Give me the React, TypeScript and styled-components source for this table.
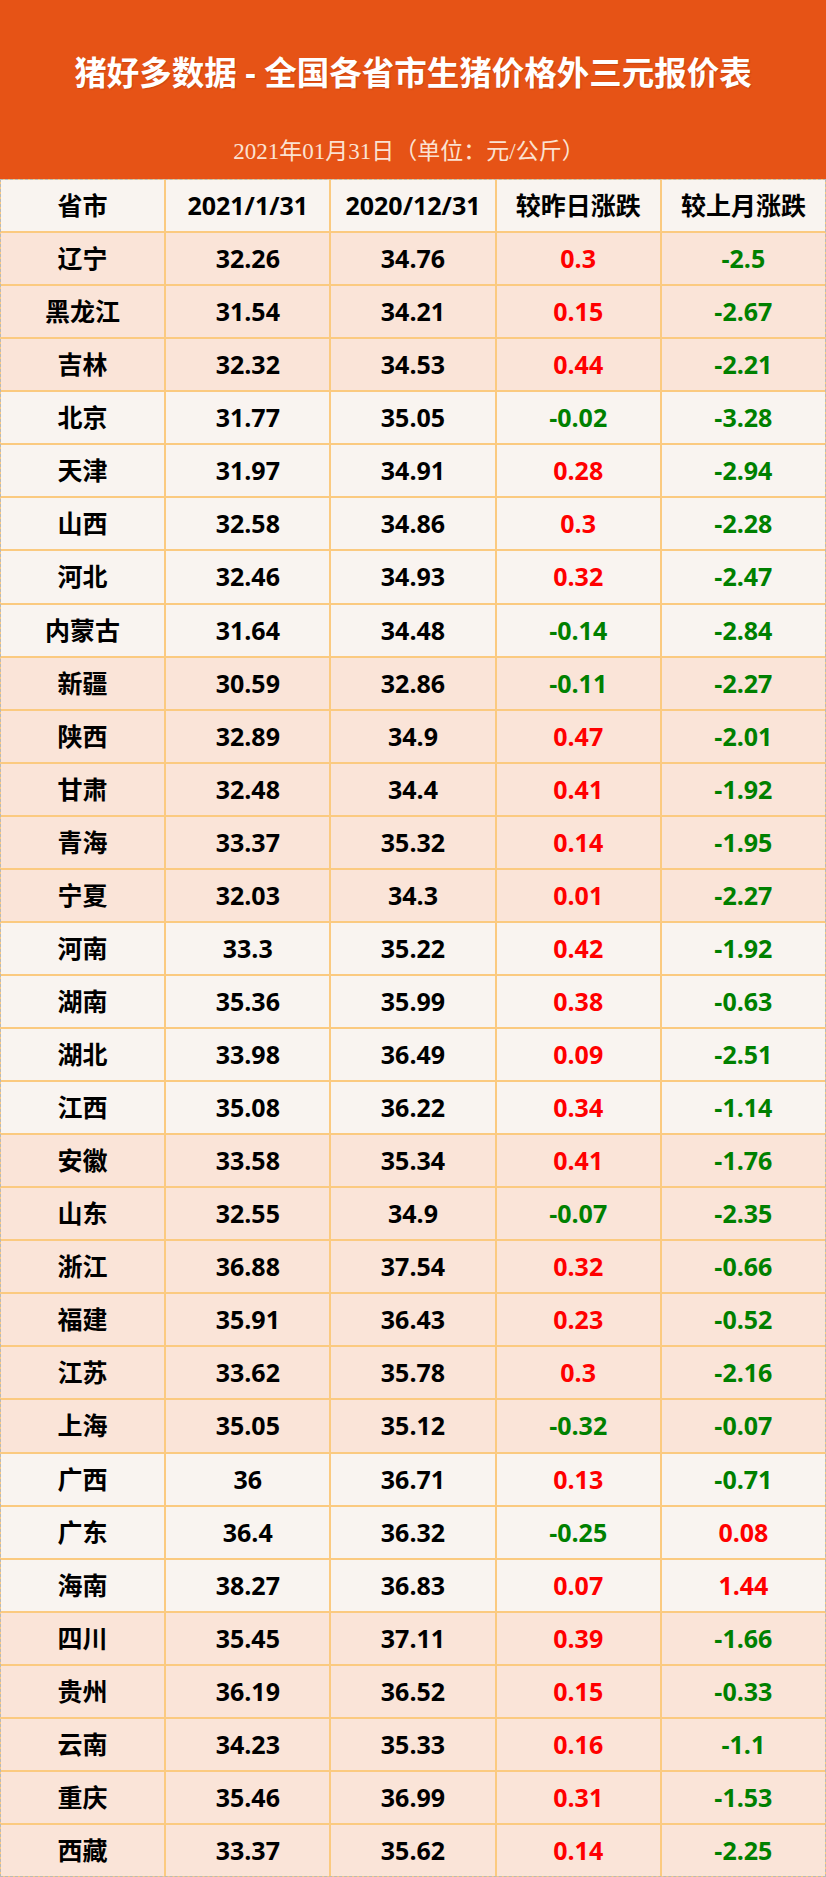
import React from "react";
import styled, { createGlobalStyle } from "styled-components";

type Tone = "light" | "pink";

type PriceRow = {
  name: string;
  today: string;
  lastMonth: string;
  dayDiff: string;
  monthDiff: string;
  tone: Tone;
};

const raw: [string, string, string, string, string][] = [
  ["辽宁", "32.26", "34.76", "0.3", "-2.5"],
  ["黑龙江", "31.54", "34.21", "0.15", "-2.67"],
  ["吉林", "32.32", "34.53", "0.44", "-2.21"],
  ["北京", "31.77", "35.05", "-0.02", "-3.28"],
  ["天津", "31.97", "34.91", "0.28", "-2.94"],
  ["山西", "32.58", "34.86", "0.3", "-2.28"],
  ["河北", "32.46", "34.93", "0.32", "-2.47"],
  ["内蒙古", "31.64", "34.48", "-0.14", "-2.84"],
  ["新疆", "30.59", "32.86", "-0.11", "-2.27"],
  ["陕西", "32.89", "34.9", "0.47", "-2.01"],
  ["甘肃", "32.48", "34.4", "0.41", "-1.92"],
  ["青海", "33.37", "35.32", "0.14", "-1.95"],
  ["宁夏", "32.03", "34.3", "0.01", "-2.27"],
  ["河南", "33.3", "35.22", "0.42", "-1.92"],
  ["湖南", "35.36", "35.99", "0.38", "-0.63"],
  ["湖北", "33.98", "36.49", "0.09", "-2.51"],
  ["江西", "35.08", "36.22", "0.34", "-1.14"],
  ["安徽", "33.58", "35.34", "0.41", "-1.76"],
  ["山东", "32.55", "34.9", "-0.07", "-2.35"],
  ["浙江", "36.88", "37.54", "0.32", "-0.66"],
  ["福建", "35.91", "36.43", "0.23", "-0.52"],
  ["江苏", "33.62", "35.78", "0.3", "-2.16"],
  ["上海", "35.05", "35.12", "-0.32", "-0.07"],
  ["广西", "36", "36.71", "0.13", "-0.71"],
  ["广东", "36.4", "36.32", "-0.25", "0.08"],
  ["海南", "38.27", "36.83", "0.07", "1.44"],
  ["四川", "35.45", "37.11", "0.39", "-1.66"],
  ["贵州", "36.19", "36.52", "0.15", "-0.33"],
  ["云南", "34.23", "35.33", "0.16", "-1.1"],
  ["重庆", "35.46", "36.99", "0.31", "-1.53"],
  ["西藏", "33.37", "35.62", "0.14", "-2.25"],
];

// shading groups as in the source sheet (row index -> tone)
const lightRows = new Set([3, 4, 5, 6, 7, 13, 14, 15, 16, 23, 24, 25]);

const rows: PriceRow[] = raw.map(([name, today, lastMonth, dayDiff, monthDiff], i) => ({
  name,
  today,
  lastMonth,
  dayDiff,
  monthDiff,
  tone: lightRows.has(i) ? "light" : "pink",
}));

const GlobalStyle = createGlobalStyle`
  html, body {
    margin: 0;
    padding: 0;
    background: #ffffff;
  }
  body {
    font-family: "Open Sans", "Noto Sans CJK SC", sans-serif;
  }
`;

const Page = styled.div`
  width: 826px;
  height: 1877px;
  display: flex;
  flex-direction: column;
`;

const Banner = styled.header`
  height: 179px;
  box-sizing: border-box;
  padding-top: 53px;
  background: #e65316;
  display: flex;
  flex-direction: column;
  align-items: center;
`;

const Title = styled.h1`
  margin: 0;
  height: 40px;
  line-height: 40px;
  font-size: 32.5px;
  font-weight: 700;
  color: #ffffff;
  font-family: "Open Sans", "Noto Sans CJK SC", sans-serif;
  text-shadow: 1px 1px 1px rgba(120, 30, 0, 0.25);
  white-space: pre;
`;

const Subtitle = styled.div`
  margin-top: 44px;
  height: 30px;
  line-height: 30px;
  font-size: 23px;
  color: #fbe2d2;
  font-family: "Liberation Serif", "Noto Sans CJK SC", serif;
  font-weight: 400;
  margin-right: 8px;
`;

const Table = styled.div`
  flex: 1;
  box-sizing: border-box;
  border: 1px dashed #b9b9b9;
  background: #fbca80;
  display: grid;
  grid-template-columns: repeat(5, 1fr);
  grid-template-rows: repeat(32, 1fr);
  gap: 2px;
`;

const Cell = styled.div<{ $tone: Tone; $color?: string }>`
  display: flex;
  align-items: center;
  justify-content: center;
  background: ${(p) => (p.$tone === "light" ? "#f9f4f0" : "#fae4d8")};
  color: ${(p) => p.$color ?? "#000000"};
  font-size: 25px;
  font-weight: 700;
  line-height: 1;
`;

const diffColor = (v: string) => (v.startsWith("-") ? "#008000" : "#ff0000");

export default function App() {
  const headers = ["省市", "2021/1/31", "2020/12/31", "较昨日涨跌", "较上月涨跌"];
  return (
    <>
      <GlobalStyle />
      <Page>
        <Banner>
          <Title>猪好多数据 - 全国各省市生猪价格外三元报价表</Title>
          <Subtitle>2021年01月31日（单位：元/公斤）</Subtitle>
        </Banner>
        <Table>
          {headers.map((h) => (
            <Cell key={h} $tone="light">
              {h}
            </Cell>
          ))}
          {rows.map((r) => (
            <React.Fragment key={r.name}>
              <Cell $tone={r.tone}>{r.name}</Cell>
              <Cell $tone={r.tone}>{r.today}</Cell>
              <Cell $tone={r.tone}>{r.lastMonth}</Cell>
              <Cell $tone={r.tone} $color={diffColor(r.dayDiff)}>
                {r.dayDiff}
              </Cell>
              <Cell $tone={r.tone} $color={diffColor(r.monthDiff)}>
                {r.monthDiff}
              </Cell>
            </React.Fragment>
          ))}
        </Table>
      </Page>
    </>
  );
}
